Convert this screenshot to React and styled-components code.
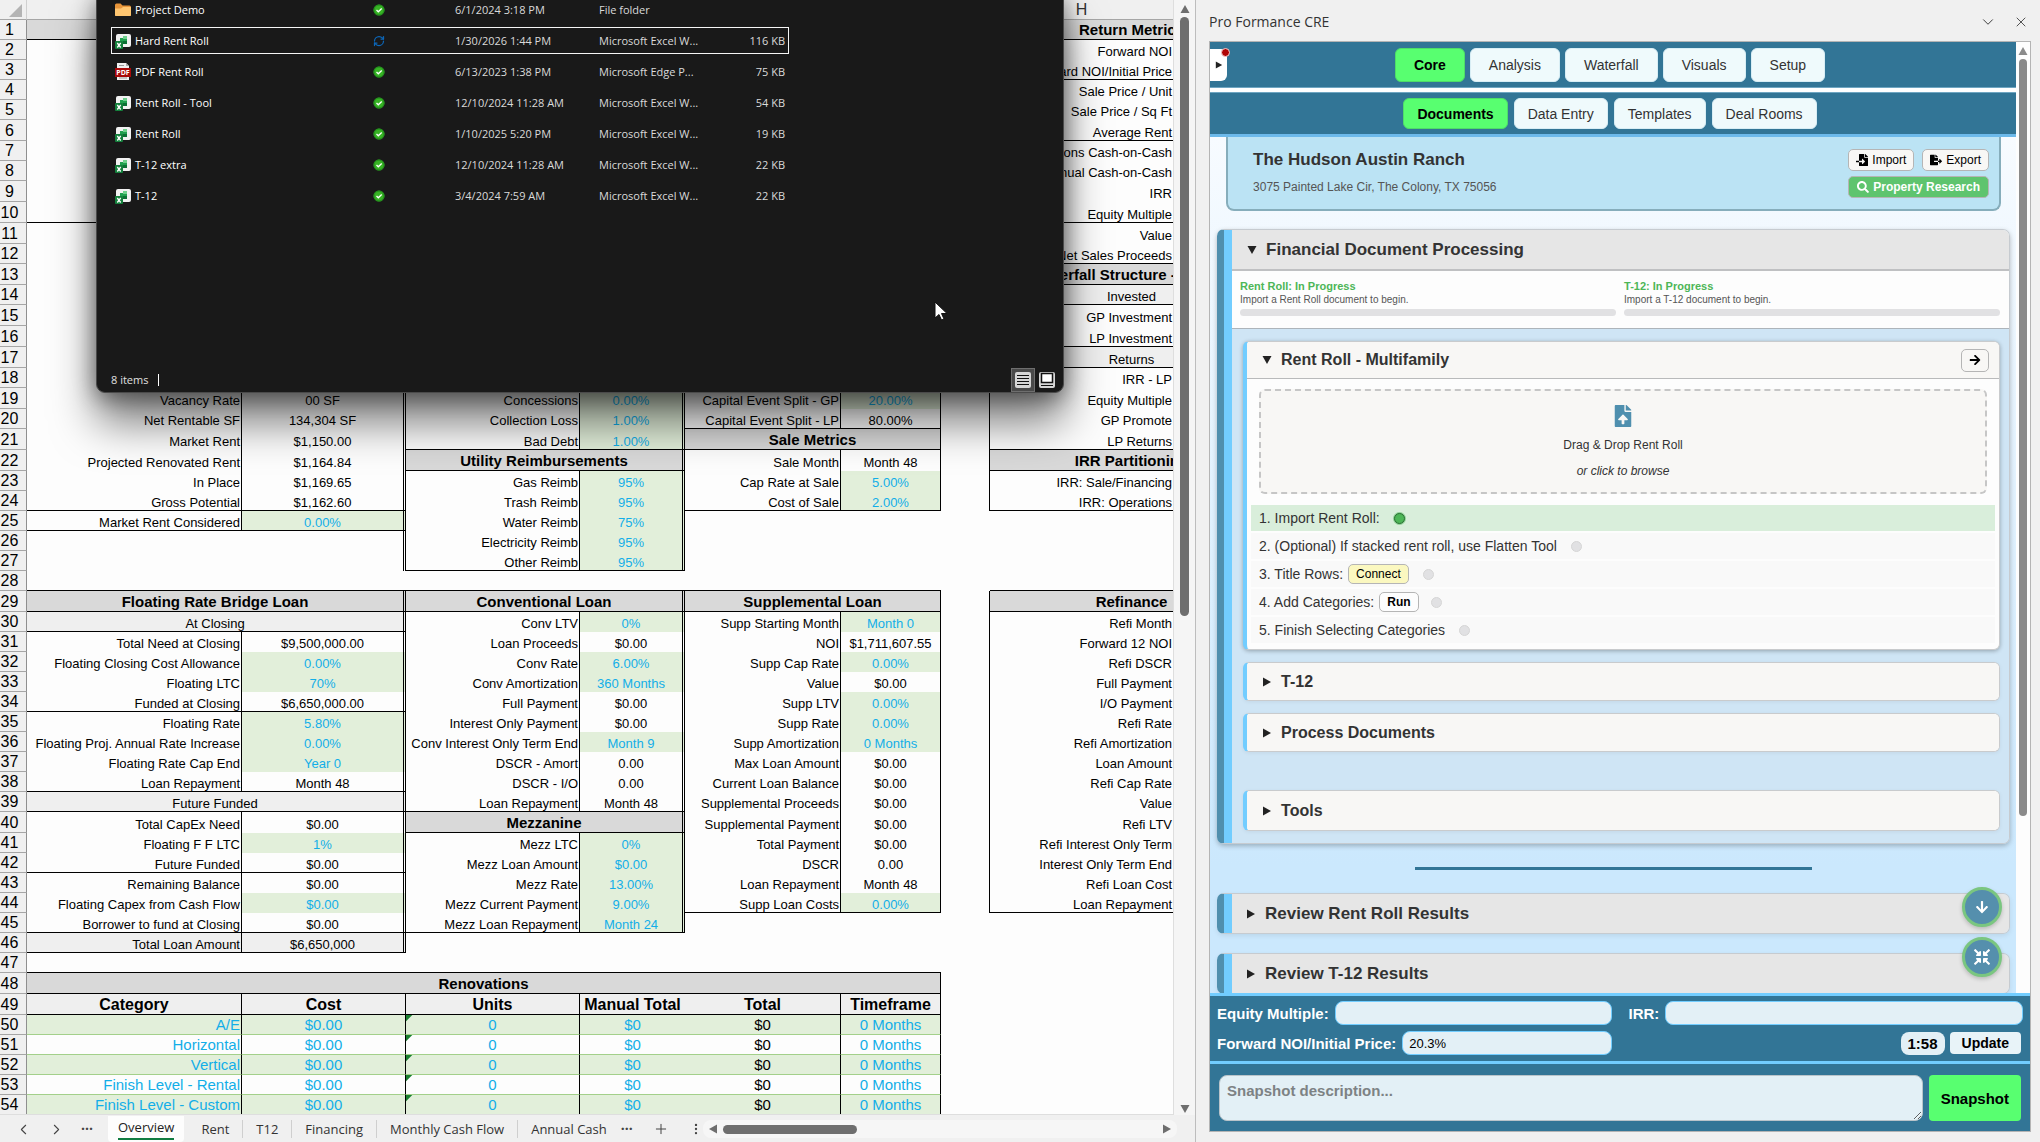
import React from "react"
import styled, { createGlobalStyle } from "styled-components"
import {
  FaArrowDown,
  FaArrowRight,
  FaCompressArrowsAlt,
  FaFileExport,
  FaFileImport,
  FaFileUpload,
  FaSearch,
} from "react-icons/fa"
import { ChevronDown, ChevronLeft, ChevronRight, MoreVertical, Plus, RefreshCw, X } from "lucide-react"

const GlobalStyle = createGlobalStyle`
  * { box-sizing: border-box; }
  body {
    margin: 0;
    overflow: hidden;
    background: #f0f0f0;
    color: #000;
    font-family: "Liberation Sans", Arial, sans-serif;
  }
  button, input, textarea { font-family: inherit; }
  button { cursor: pointer; }
`

const uiFont = `"Open Sans", "Noto Sans", sans-serif`

const Screen = styled.div`
  position: relative;
  display: flex;
  height: 100vh;
  overflow: hidden;
`

/* ---------- workbook ---------- */

const Workbook = styled.main`
  flex: 1;
  min-width: 0;
  display: flex;
  flex-direction: column;
`
const SheetArea = styled.div`
  flex: 1;
  min-height: 0;
  display: flex;
`
const SheetView = styled.div`
  flex: 1;
  min-width: 0;
  overflow: hidden;
  background: #fdfdfd;
  border-right: 1px solid #dedede;
  border-bottom: 1px solid #dedede;
`
const Grid = styled.table`
  width: 1273px;
  table-layout: fixed;
  border-collapse: separate;
  border-spacing: 0;
`
const GridRow = styled.tr`
  height: ${props => props.h}px;
`
const Corner = styled.td`
  padding: 0 4px 2px 0;
  background: #f0f0f0;
  border-right: 1px solid #d0d0d0;
  border-bottom: 1px solid #a6a6a6;
  line-height: 0;
  text-align: right;
  vertical-align: bottom;
`
const ColHead = styled.th`
  padding: 0;
  background: #f0f0f0;
  border-bottom: 1px solid #a6a6a6;
  color: #333;
  font-size: 16px;
  font-weight: normal;
  line-height: 18px;
`
const RowHead = styled.th`
  padding: 0 7px 0 0;
  background: #f0f0f0;
  border-right: 1px solid #8f8f8f;
  border-bottom: 1px solid #a6a6a6;
  font-size: 16px;
  font-weight: normal;
  line-height: 18px;
  text-align: center;
  vertical-align: bottom;
  white-space: nowrap;
`

const sides = {
  line: "1px solid #000",
  double: "3px double #000",
}
const tones = {
  title: "#d9d9d9",
  sub: "#efefef",
  input: "#e2efda",
}

const Cell = styled.td`
  padding: 0 1px ${props => (props.$rule && !props.$size ? 0 : 1)}px;
  overflow: hidden;
  white-space: nowrap;
  vertical-align: bottom;
  background: ${props => tones[props.$tone] || "transparent"};
  color: ${props => (props.$blue ? "#12aee8" : "#000")};
  font-size: ${props => props.$size || 13}px;
  font-weight: ${props => (props.$bold ? "bold" : "normal")};
  line-height: ${props => (props.$size ? 17 : 15)}px;
  text-align: ${props => props.$align || "center"};
  ${props => (props.$rule ? `border-bottom: 1px solid ${props.$rule};` : "")}
  ${props => (props.$side ? `border-right: ${sides[props.$side]};` : "")}
`
const ErrorCell = styled(Cell)`
  background-image: linear-gradient(135deg, #1a8030 4px, transparent 5px);
`

const Columns = [27, 215, 164, 174, 105, 156, 100, 49, 183, 100]

const HEIGHTS = [
  20, 20, 20, 20, 20, 21, 20, 20, 21, 21, 21, 20, 21, 20, 21, 21, 21, 20, 21, 20,
  21, 21, 20, 20, 20, 20, 20, 20, 21, 20, 20, 20, 20, 20, 20, 20, 20, 20, 20, 21,
  20, 20, 20, 20, 20, 20, 20, 21, 21, 20, 20, 20, 20, 20,
]

const title = text => ({ kind: "title", text })
const sub = text => ({ kind: "sub", text })
const rule = { kind: "rule" }
const open = { kind: "open" }
// flags: i = input cell, e = last line of a group, t = shaded total
const item = (label, value, flags = "") => ({
  kind: "item",
  label,
  value,
  input: flags.includes("i"),
  end: flags.includes("e"),
  total: flags.includes("t"),
})

const BLOCKS = [
  {
    side: "double",
    rows: {
      1: title(""),
      10: rule,
      19: item("Vacancy Rate", "00 SF"),
      20: item("Net Rentable SF", "134,304 SF"),
      21: item("Market Rent", "$1,150.00"),
      22: item("Projected Renovated Rent", "$1,164.84"),
      23: item("In Place", "$1,169.65"),
      24: item("Gross Potential", "$1,162.60", "e"),
      25: item("Market Rent Considered", "0.00%", "ie"),
      26: open,
      27: open,
      28: rule,
      29: title("Floating Rate Bridge Loan"),
      30: sub("At Closing"),
      31: item("Total Need at Closing", "$9,500,000.00"),
      32: item("Floating Closing Cost Allowance", "0.00%", "i"),
      33: item("Floating LTC", "70%", "i"),
      34: item("Funded at Closing", "$6,650,000.00", "e"),
      35: item("Floating Rate", "5.80%", "i"),
      36: item("Floating Proj. Annual Rate Increase", "0.00%", "i"),
      37: item("Floating Rate Cap End", "Year 0", "i"),
      38: item("Loan Repayment", "Month 48", "e"),
      39: sub("Future Funded"),
      40: item("Total CapEx Need", "$0.00"),
      41: item("Floating F F LTC", "1%", "i"),
      42: item("Future Funded", "$0.00", "e"),
      43: item("Remaining Balance", "$0.00"),
      44: item("Floating Capex from Cash Flow", "$0.00", "i"),
      45: item("Borrower to fund at Closing", "$0.00", "e"),
      46: item("Total Loan Amount", "$6,650,000", "et"),
      47: rule,
    },
  },
  {
    side: "double",
    rows: {
      19: item("Concessions", "0.00%", "i"),
      20: item("Collection Loss", "1.00%", "i"),
      21: item("Bad Debt", "1.00%", "ie"),
      22: title("Utility Reimbursements"),
      23: item("Gas Reimb", "95%", "i"),
      24: item("Trash Reimb", "95%", "i"),
      25: item("Water Reimb", "75%", "i"),
      26: item("Electricity Reimb", "95%", "i"),
      27: item("Other Reimb", "95%", "ie"),
      28: rule,
      29: title("Conventional Loan"),
      30: item("Conv LTV", "0%", "i"),
      31: item("Loan Proceeds", "$0.00"),
      32: item("Conv Rate", "6.00%", "i"),
      33: item("Conv Amortization", "360 Months", "i"),
      34: item("Full Payment", "$0.00"),
      35: item("Interest Only Payment", "$0.00"),
      36: item("Conv Interest Only Term End", "Month 9", "i"),
      37: item("DSCR - Amort", "0.00"),
      38: item("DSCR - I/O", "0.00"),
      39: item("Loan Repayment", "Month 48", "e"),
      40: title("Mezzanine"),
      41: item("Mezz LTC", "0%", "i"),
      42: item("Mezz Loan Amount", "$0.00", "i"),
      43: item("Mezz Rate", "13.00%", "i"),
      44: item("Mezz Current Payment", "9.00%", "i"),
      45: item("Mezz Loan Repayment", "Month 24", "ie"),
      47: rule,
    },
  },
  {
    side: "line",
    rows: {
      19: item("Capital Event Split - GP", "20.00%", "i"),
      20: item("Capital Event Split - LP", "80.00%", "e"),
      21: title("Sale Metrics"),
      22: item("Sale Month", "Month 48"),
      23: item("Cap Rate at Sale", "5.00%", "i"),
      24: item("Cost of Sale", "2.00%", "ie"),
      28: rule,
      29: title("Supplemental Loan"),
      30: item("Supp Starting Month", "Month 0", "i"),
      31: item("NOI", "$1,711,607.55"),
      32: item("Supp Cap Rate", "0.00%", "i"),
      33: item("Value", "$0.00"),
      34: item("Supp LTV", "0.00%", "i"),
      35: item("Supp Rate", "0.00%", "i"),
      36: item("Supp Amortization", "0 Months", "i"),
      37: item("Max Loan Amount", "$0.00"),
      38: item("Current Loan Balance", "$0.00"),
      39: item("Supplemental Proceeds", "$0.00"),
      40: item("Supplemental Payment", "$0.00"),
      41: item("Total Payment", "$0.00"),
      42: item("DSCR", "0.00"),
      43: item("Loan Repayment", "Month 48"),
      44: item("Supp Loan Costs", "0.00%", "ie"),
      47: rule,
    },
  },
]

const RETURNS = {
  1: title("Return Metrics"),
  2: item("Forward NOI"),
  3: item("Forward NOI/Initial Price", "", "e"),
  4: item("Sale Price / Unit"),
  5: item("Sale Price / Sq Ft"),
  6: item("Average Rent", "", "e"),
  7: item("Operations Cash-on-Cash"),
  8: item("Annual Cash-on-Cash"),
  9: item("IRR"),
  10: item("Equity Multiple", "", "e"),
  11: item("Value"),
  12: item("Net Sales Proceeds", "", "e"),
  13: title("Waterfall Structure - Annual"),
  14: sub("Invested"),
  15: item("GP Investment"),
  16: item("LP Investment", "", "e"),
  17: sub("Returns"),
  18: item("IRR - LP"),
  19: item("Equity Multiple"),
  20: item("GP Promote"),
  21: item("LP Returns", "", "e"),
  22: title("IRR Partitioning"),
  23: item("IRR: Sale/Financing"),
  24: item("IRR: Operations", "", "e"),
  28: rule,
  29: title("Refinance"),
  30: item("Refi Month"),
  31: item("Forward 12 NOI"),
  32: item("Refi DSCR"),
  33: item("Full Payment"),
  34: item("I/O Payment"),
  35: item("Refi Rate"),
  36: item("Refi Amortization"),
  37: item("Loan Amount"),
  38: item("Refi Cap Rate"),
  39: item("Value"),
  40: item("Refi LTV"),
  41: item("Refi Interest Only Term"),
  42: item("Interest Only Term End"),
  43: item("Refi Loan Cost"),
  44: item("Loan Repayment", "", "e"),
}

const RENOVATIONS = {
  50: "A/E",
  51: "Horizontal",
  52: "Vertical",
  53: "Finish Level - Rental",
  54: "Finish Level - Custom",
}

const BlockCells = ({ entry, side, inner }) => {
  if (!entry) return <><Cell /><Cell /></>
  if (entry.kind === "rule") return <Cell colSpan={2} $rule="#000" />
  if (entry.kind === "open") return <><Cell /><Cell $side={side} /></>
  if (entry.kind === "title") {
    return <Cell colSpan={2} $tone="title" $bold $size={15} $rule="#000" $side={side}>{entry.text}</Cell>
  }
  if (entry.kind === "sub") {
    return <Cell colSpan={2} $tone="sub" $rule="#000" $side={side}>{entry.text}</Cell>
  }
  const end = entry.end ? "#000" : undefined
  return (
    <>
      <Cell $align="right" $side={inner} $rule={end} $tone={entry.total && "sub"}>{entry.label}</Cell>
      <Cell
        $side={side}
        $rule={end}
        $blue={entry.input}
        $tone={entry.input ? "input" : entry.total && "sub"}
      >
        {entry.value}
      </Cell>
    </>
  )
}

const RenovationCells = ({ n }) => {
  if (n === 48) {
    return <Cell colSpan={6} $tone="title" $bold $size={15} $rule="#000" $side="line">Renovations</Cell>
  }
  if (n === 49) {
    const head = { $tone: "sub", $bold: true, $size: 16, $rule: "#000" }
    return (
      <>
        <Cell {...head} $side="line">Category</Cell>
        <Cell {...head} $side="line">Cost</Cell>
        <Cell {...head} $side="line">Units</Cell>
        <Cell {...head}>Manual Total</Cell>
        <Cell {...head} $side="line">Total</Cell>
        <Cell {...head} $side="line">Timeframe</Cell>
      </>
    )
  }
  const body = { $tone: n % 2 === 0 ? "input" : undefined, $size: 15, $rule: "#a3d08a" }
  return (
    <>
      <Cell {...body} $blue $align="right" $side="line">{RENOVATIONS[n]}</Cell>
      <Cell {...body} $blue $side="line">$0.00</Cell>
      <ErrorCell {...body} $blue $side="line">0</ErrorCell>
      <Cell {...body} $blue>$0</Cell>
      <Cell {...body} $side="line">$0</Cell>
      <Cell {...body} $blue $side="line">0 Months</Cell>
    </>
  )
}

const Spreadsheet = () => (
  <Grid>
    <colgroup>
      {Columns.map((w, i) => <col key={i} width={w} />)}
    </colgroup>
    <thead>
      <GridRow h={20}>
        <Corner><svg width="13" height="13"><path d="M13 0v13H0z" fill="#b4b4b4" /></svg></Corner>
        <ColHead colSpan={7} />
        <ColHead>H</ColHead>
        <ColHead />
      </GridRow>
    </thead>
    <tbody>
      {HEIGHTS.map((h, i) => {
        const n = i + 1
        const right = RETURNS[n]
        return (
          <GridRow key={n} h={h}>
            <RowHead scope="row">{n}</RowHead>
            {n >= 48
              ? <RenovationCells n={n} />
              : BLOCKS.map((b, k) => <BlockCells key={k} entry={b.rows[n]} side={b.side} inner="line" />)}
            <Cell $side={right && right.kind !== "rule" ? "line" : undefined} />
            <BlockCells entry={right} />
          </GridRow>
        )
      })}
    </tbody>
  </Grid>
)

/* ---------- scroll bars ---------- */

const VScroll = styled.div`
  flex: none;
  width: 21px;
  display: flex;
  flex-direction: column;
  align-items: center;
  padding: 4px 0 1px;
  background: #f5f5f5;
`
const VThumb = styled.div`
  width: ${props => props.$w}px;
  height: ${props => props.$size};
  margin: ${props => props.$gap}px 0 auto;
  border-radius: 5px;
  background: ${props => props.$color};
`
const HScroll = styled.div`
  flex: 1;
  display: flex;
  align-items: center;
  height: 18px;
  margin-right: 18px;
  padding: 0 5px;
  border-radius: 8px;
  background: #f6f6f6;
`
const HThumb = styled.div`
  width: 29%;
  height: 9px;
  margin: 0 auto 0 5px;
  border-radius: 5px;
  background: #6e6e6e;
`

const turns = { up: 0, right: 90, down: 180, left: 270 }
const Arrow = ({ to, color = "#6e6e6e", size = 10 }) => (
  <svg width={size} height={size} viewBox="0 0 10 10" aria-hidden="true">
    <path d="M5 1 9.500 9H.5z" fill={color} transform={`rotate(${turns[to]} 5 5)`} />
  </svg>
)

/* ---------- sheet tabs ---------- */

const TabBar = styled.nav`
  flex: none;
  display: flex;
  align-items: center;
  height: 27px;
  padding-top: 1px;
  background: #f0f0f0;
  font-family: ${uiFont};
`
const TabTools = styled.div`
  display: flex;
  align-items: center;
  justify-content: space-between;
  width: ${props => props.$w}px;
  padding: 0 ${props => props.$pad}px;
  color: #444;
`
const Dots = styled.span`
  font-size: 14px;
  font-weight: bold;
  line-height: 16px;
`
const SheetTab = styled.button`
  height: 18px;
  padding: 0 13px;
  border: 0;
  border-right: 1px solid ${props => (props.$last ? "transparent" : "#cfcfcf")};
  background: none;
  color: #333;
  font-size: 13px;
  line-height: 18px;
  white-space: nowrap;
`
const ActiveTab = styled.button`
  align-self: stretch;
  margin-right: 4px;
  padding: 0 10px 2px;
  border: 0;
  border-radius: 0 0 4px 4px;
  background: #fdfdfd;
  color: #222;
  font-size: 13px;
  line-height: 22px;
  span {
    display: block;
    border-bottom: 2px solid #107c41;
  }
`

/* ---------- file explorer ---------- */

const Explorer = styled.section`
  position: absolute;
  z-index: 2;
  top: -7px;
  left: 96px;
  width: 968px;
  height: 400px;
  display: flex;
  flex-direction: column;
  justify-content: space-between;
  border: 1px solid #4a4a4a;
  border-radius: 0 0 9px 9px;
  background: #191919;
  box-shadow: 0 30px 44px rgba(0, 0, 0, 0.5), 0 4px 22px rgba(0, 0, 0, 0.45);
  font-family: ${uiFont};
  font-size: 11px;
`
const FileTable = styled.table`
  width: 682px;
  margin-left: 12px;
  table-layout: fixed;
  border-collapse: collapse;
  color: #dadada;
`
const FileRow = styled.tr`
  height: 31px;
  ${props => (props.$selected ? "outline: 1px solid #f5f5f5; outline-offset: -3px; border-radius: 2px;" : "")}
`
const FileCell = styled.td`
  padding: 0 6px 0 0;
  white-space: nowrap;
  vertical-align: middle;
  text-align: ${props => props.$align || "left"};
  svg { display: block; }
`
const FileName = styled.div`
  display: flex;
  align-items: center;
  gap: 4px;
  padding-left: 6px;
  color: #fff;
`
const ExplorerStatus = styled.footer`
  display: flex;
  align-items: center;
  height: 25px;
  padding: 0 4px 0 14px;
  color: #e0e0e0;
`
const StatusMark = styled.span`
  width: 1px;
  height: 12px;
  margin: 0 auto 0 10px;
  background: #fff;
`
const ViewButton = styled.button`
  display: flex;
  align-items: center;
  justify-content: center;
  width: 24px;
  height: 24px;
  padding: 0;
  border: 1px solid ${props => (props.$on ? "#6e6e6e" : "transparent")};
  background: ${props => (props.$on ? "#4a4a4a" : "none")};
`
const Pointer = styled.svg`
  position: absolute;
  z-index: 3;
  top: 301px;
  left: 934px;
`

const FolderIcon = () => (
  <svg width="16" height="16" viewBox="0 0 16 16">
    <path d="M0 3a1.500 1.500 0 0 1 1.500-1.500h4L7.500 3.500h7A1.500 1.500 0 0 1 16 5v8a1 1 0 0 1-1 1H1a1 1 0 0 1-1-1z" fill="#e8953a" />
    <path d="M0 6.500h6L8 5h8v8a1 1 0 0 1-1 1H1a1 1 0 0 1-1-1z" fill="#ffc670" />
  </svg>
)
const ExcelIcon = () => (
  <svg width="16" height="16" viewBox="0 0 16 16">
    <rect x="1" y="1" width="15" height="13" rx="2" fill="#f2f2f2" />
    <path d="M5 5h3V3h4v8H8v-1H5z" fill="#21a050" />
    <path d="M8 3h4v3H8z" fill="#6fd08c" />
    <path d="M8 8h4v3H8z" fill="#0c7034" />
    <rect x="0" y="8" width="8" height="8" rx="1" fill="#14803c" />
    <path d="M2.300 10 5.700 14.500M5.700 10 2.300 14.500" stroke="#fff" strokeWidth="1.300" />
  </svg>
)
const PdfIcon = () => (
  <svg width="16" height="17" viewBox="0 0 16 17">
    <path d="M2 0h9l3 3v14H2z" fill="#f0f0f0" />
    <path d="M11 0v3h3z" fill="#a8a8a8" />
    <path d="M4 2.500h5M4 15h8" stroke="#9a9a9a" />
    <rect x="0" y="5" width="16" height="9" fill="#a80808" />
    <text x="8" y="12" fill="#fff" fontSize="7" fontWeight="bold" textAnchor="middle">PDF</text>
  </svg>
)
const SyncedIcon = () => (
  <svg width="12" height="12" viewBox="0 0 12 12">
    <circle cx="6" cy="6" r="5.500" fill="#37b324" />
    <circle cx="6" cy="6" r="5" fill="none" stroke="#1f8a1c" />
    <path d="m3.500 6 1.800 1.800L8.700 4.500" fill="none" stroke="#fff" strokeWidth="1.300" />
  </svg>
)

const fileIcons = { folder: <FolderIcon />, excel: <ExcelIcon />, pdf: <PdfIcon /> }

const FILES = [
  { icon: "folder", name: "Project Demo", date: "6/1/2024 3:18 PM", type: "File folder", size: "" },
  { icon: "excel", name: "Hard Rent Roll", date: "1/30/2026 1:44 PM", type: "Microsoft Excel W...", size: "116 KB", selected: true },
  { icon: "pdf", name: "PDF Rent Roll", date: "6/13/2023 1:38 PM", type: "Microsoft Edge P...", size: "75 KB" },
  { icon: "excel", name: "Rent Roll - Tool", date: "12/10/2024 11:28 AM", type: "Microsoft Excel W...", size: "54 KB" },
  { icon: "excel", name: "Rent Roll", date: "1/10/2025 5:20 PM", type: "Microsoft Excel W...", size: "19 KB" },
  { icon: "excel", name: "T-12 extra", date: "12/10/2024 11:28 AM", type: "Microsoft Excel W...", size: "22 KB" },
  { icon: "excel", name: "T-12", date: "3/4/2024 7:59 AM", type: "Microsoft Excel W...", size: "22 KB" },
]

const FileExplorer = () => (
  <Explorer>
    <FileTable>
      <colgroup>
        <col width="264" />
        <col width="82" />
        <col width="144" />
        <col width="110" />
        <col width="82" />
      </colgroup>
      <tbody>
        {FILES.map(f => (
          <FileRow key={f.name} $selected={f.selected}>
            <FileCell><FileName>{fileIcons[f.icon]}{f.name}</FileName></FileCell>
            <FileCell>
              {f.selected ? <RefreshCw size={12} color="#0c66b8" strokeWidth={2.5} /> : <SyncedIcon />}
            </FileCell>
            <FileCell>{f.date}</FileCell>
            <FileCell>{f.type}</FileCell>
            <FileCell $align="right">{f.size}</FileCell>
          </FileRow>
        ))}
      </tbody>
    </FileTable>
    <ExplorerStatus>
      8 items
      <StatusMark />
      <ViewButton $on aria-label="Details view">
        <svg width="16" height="16">
          <rect width="16" height="16" rx="2" fill="#d6d6d6" />
          <path d="M2 3.500h12M2 6.500h12M2 9.500h12M2 12.500h12" stroke="#111" />
        </svg>
      </ViewButton>
      <ViewButton aria-label="Thumbnail view">
        <svg width="16" height="16">
          <rect width="16" height="16" rx="2" fill="#d6d6d6" />
          <path d="M2.500 1.500h11v9h-11z" fill="#fff" stroke="#111" strokeWidth="1.500" />
          <path d="M2 13.500h12" stroke="#111" />
        </svg>
      </ViewButton>
    </ExplorerStatus>
  </Explorer>
)

/* ---------- task pane ---------- */

const Pane = styled.aside`
  flex: none;
  width: 41.42%;
  display: flex;
  flex-direction: column;
  padding: 0 9px 10px 13px;
  border-left: 1px solid #bdbdbd;
  background: #f0f0f0;
`
const PaneTitle = styled.header`
  flex: none;
  display: flex;
  align-items: center;
  gap: 16px;
  height: 41px;
  padding: 2px 2px 0 0;
  color: #333;
  font-family: ${uiFont};
  font-size: 14px;
  h1 {
    margin: 0 auto 0 0;
    font-size: 14px;
    font-weight: normal;
  }
`
const IconButton = styled.button`
  padding: 0;
  border: 0;
  background: none;
  color: #333;
  line-height: 0;
`
const Frame = styled.div`
  flex: 1;
  min-height: 0;
  display: flex;
  flex-direction: column;
  border: 1px solid #b4b4b4;
  background: #fff;
`
const FrameBody = styled.div`
  flex: 1;
  min-height: 0;
  display: flex;
`
const PaneScroll = styled(VScroll)`
  width: 14px;
  background: #fdfdfd;
`
const PaneMain = styled.div`
  flex: 1;
  min-width: 0;
  display: flex;
  flex-direction: column;
`
const NavBar = styled.nav`
  position: relative;
  flex: none;
  display: flex;
  justify-content: center;
  background: #327596;
  ${props => (props.$sub
    ? "gap: 6px; margin-top: 4px; padding: 5px 6px 5px 0; border-top: 1px solid #6fa6c2; border-bottom: 3px solid #6cb9ea;"
    : "gap: 5px; padding: 6px 6px 5px 0; border-bottom: 1px solid #6fa6c2;")}
`
const NavButton = styled.button`
  height: ${props => (props.$sub ? 31 : 34)}px;
  padding: 0 ${props => (props.$sub ? 13 : 18)}px;
  border: 1px solid ${props => (props.$on ? "#4fdc68" : "#d8eef5")};
  border-radius: 6px;
  background: ${props => (props.$on ? "#58ff70" : "#effafc")};
  color: ${props => (props.$on ? "#000" : "#333")};
  font-size: 14px;
  font-weight: ${props => (props.$on ? "bold" : "normal")};
`
const DrawerTab = styled.button`
  position: absolute;
  top: 7px;
  left: 0;
  width: 17px;
  height: 32px;
  padding: 0;
  border: 0;
  border-radius: 0 6px 6px 0;
  background: #fff;
  line-height: 0;
`
const Alert = styled.span`
  position: absolute;
  top: -1px;
  right: -3px;
  width: 9px;
  height: 9px;
  border: 1px solid #f3d0d0;
  border-radius: 50%;
  background: #b00505;
`
const Content = styled.div`
  position: relative;
  flex: 1;
  min-height: 0;
  overflow: hidden;
  padding: 0 6px 0 7px;
  background: linear-gradient(#f7fbff, #cbe8fd 85%);
`
const PropertyCard = styled.section`
  display: flex;
  align-items: center;
  justify-content: space-between;
  margin: 0 9px;
  padding: 12px 10px 11px 25px;
  border: 2px solid #86adbb;
  border-top: 0;
  border-radius: 0 0 8px 8px;
  background: #bbe3f4;
  h2 {
    margin: 0 0 7px;
    color: #333;
    font-size: 17px;
    line-height: 20px;
  }
  p {
    margin: 0;
    color: #555;
    font-size: 12px;
    line-height: 20px;
  }
`
const PropertyActions = styled.div`
  display: grid;
  grid-template-columns: auto auto;
  gap: 5px 8px;
`
const SmallButton = styled.button`
  display: inline-flex;
  align-items: center;
  justify-content: center;
  gap: 4px;
  height: ${props => props.$h || 22}px;
  padding: 0 7px;
  border: 1px solid #b5b5b5;
  border-radius: 5px;
  background: ${props => props.$bg || "#f8f7f5"};
  color: ${props => props.$color || "#000"};
  font-size: 12px;
  font-weight: ${props => (props.$bold ? "bold" : "normal")};
  ${props => (props.$wide ? "grid-column: 1 / -1;" : "")}
`
const Section = styled.section`
  margin-top: ${props => props.$gap}px;
  overflow: hidden;
  border: 1px solid #c6cbd0;
  border-left: 7px solid #4f8fae;
  border-radius: 7px;
  box-shadow: 0 2px 5px rgba(0, 0, 0, ${props => (props.$open ? 0.25 : 0.08)});
`
const SectionInner = styled.div`
  border-left: 8px solid #72cdff;
`
const Heading = styled.button`
  display: flex;
  align-items: center;
  gap: 9px;
  width: 100%;
  height: ${props => props.$h}px;
  padding: 0 ${props => props.$pad}px;
  border: 0;
  ${props => (props.$open ? "border-bottom: 2px solid #bfc0c2;" : "")}
  background: ${props => props.$bg};
  color: #333;
  font-size: ${props => props.$size}px;
  font-weight: bold;
  text-align: left;
`
const Progress = styled.div`
  display: grid;
  grid-template-columns: 1fr 1fr;
  gap: 8px;
  padding: 8px 9px 12px 8px;
  border-bottom: 1px solid #adb4ba;
  background: #fdfdfd;
  font-size: 10px;
  line-height: 14px;
  color: #555;
  strong {
    display: block;
    color: #4db657;
    font-size: 11px;
  }
`
const Bar = styled.div`
  height: 7px;
  margin-top: 2px;
  border-radius: 4px;
  background: #e1e1e3;
`
const SectionBody = styled.div`
  display: flex;
  flex-direction: column;
  gap: 12px;
  padding: 12px 9px 12px 11px;
  background: #cfe5f5;
`
const Card = styled.section`
  overflow: hidden;
  margin-top: ${props => props.$gap || 0}px;
  border: 1px solid #c9cbcd;
  border-left: 4px solid #72cdff;
  border-radius: 6px;
  background: #fdfdfd;
  box-shadow: 0 1px 4px rgba(0, 0, 0, ${props => (props.$open ? 0.3 : 0.06)});
`
const CardHead = styled.div`
  display: flex;
  align-items: center;
  padding-right: 10px;
  border-bottom: ${props => (props.$open ? "1px solid #b9babb" : "0")};
  background: #f8f7f5;
`
const DropZone = styled.button`
  display: flex;
  flex-direction: column;
  align-items: center;
  gap: 10px;
  width: calc(100% - 24px);
  margin: 10px 12px 11px;
  padding: 14px 0 13px;
  border: 2px dashed #c6c6c6;
  border-radius: 6px;
  background: #f8f7f5;
  color: #333;
  font-size: 12px;
  line-height: 16px;
`
const Steps = styled.ul`
  display: flex;
  flex-direction: column;
  gap: 2px;
  margin: 0;
  padding: 0 4px 6px;
  list-style: none;
`
const Step = styled.li`
  display: flex;
  align-items: center;
  height: 26px;
  padding: 0 8px;
  background: ${props => (props.$done ? "#d9eedb" : "#f9f9f9")};
  color: #333;
  font-size: 14px;
  button { margin-left: 5px; }
`
const Dot = styled.span`
  width: 11px;
  height: 11px;
  margin-left: ${props => props.$gap}px;
  border: 1px solid ${props => (props.$done ? "#2c6e34" : "#d6d6d6")};
  border-radius: 50%;
  background: ${props => (props.$done ? "#4db657" : "#e1e1e3")};
  ${props => (props.$done ? "box-shadow: 0 0 0 1px #8fd097;" : "")}
`
const Divider = styled.hr`
  width: 50%;
  height: 3px;
  margin: 23px auto;
  border: 0;
  background: #327596;
`
const FabStack = styled.div`
  position: absolute;
  right: 14px;
  bottom: 16px;
  display: flex;
  flex-direction: column;
  gap: 10px;
`
const Fab = styled.button`
  display: flex;
  align-items: center;
  justify-content: center;
  width: 40px;
  height: 40px;
  padding: 0;
  border: 3px solid #7ac680;
  border-radius: 50%;
  background: #558fad;
  color: #fff;
  box-shadow: 0 2px 4px rgba(0, 0, 0, 0.2);
`
const Footer = styled.footer`
  flex: none;
  background: #327596;
  border-top: 3px solid #72cdff;
`
const Metrics = styled.div`
  display: grid;
  grid-template-columns: 1fr 1fr;
  gap: 6px 17px;
  padding: 5px 7px 6px;
`
const Field = styled.div`
  display: flex;
  align-items: center;
  gap: 6px;
  label {
    color: #fff;
    font-size: 15px;
    font-weight: bold;
    white-space: nowrap;
  }
  input {
    flex: 1;
    min-width: 0;
    height: 24px;
    padding: 0 6px;
    border: 1px solid #72cdff;
    border-radius: 8px;
    background: #e3f0f6;
    color: #000;
    font-size: 13px;
  }
`
const UpdateGroup = styled.div`
  display: flex;
  align-items: center;
  justify-content: flex-end;
  gap: 5px;
  padding-right: 2px;
`
const Timer = styled.span`
  padding: 3px 7px;
  border-radius: 8px;
  background: #e3f0f6;
  font-size: 15px;
  font-weight: bold;
  line-height: 17px;
`
const UpdateButton = styled.button`
  height: 22px;
  padding: 0 12px;
  border: 0;
  border-radius: 4px;
  background: #e8f3f8;
  font-size: 14px;
  font-weight: bold;
`
const Snapshot = styled.div`
  display: flex;
  gap: 6px;
  padding: 11px 9px 10px;
  border-top: 3px solid #72cdff;
  textarea {
    flex: 1;
    height: 46px;
    padding: 6px 7px;
    border: 1px solid #b9c4ca;
    border-radius: 8px;
    background: #e3f0f6;
    font-size: 15px;
    font-weight: bold;
    line-height: 17px;
  }
  textarea::placeholder { color: #7d8284; }
`
const SnapshotButton = styled.button`
  padding: 0 12px;
  border: 0;
  border-radius: 4px;
  background: #58ff70;
  font-size: 15px;
  font-weight: bold;
`

const Collapsed = ({ title, gap, h = 37 }) => (
  <Card $gap={gap}>
    <CardHead>
      <Heading $h={h} $pad={15} $size={16} $bg="#f8f7f5">
        <Arrow to="right" color="#222" />
        {title}
      </Heading>
    </CardHead>
  </Card>
)

const ResultSection = ({ title, gap }) => (
  <Section $gap={gap}>
    <SectionInner>
      <Heading $h={39} $pad={14} $size={17} $bg="#e6e6e6">
        <Arrow to="right" color="#222" />
        {title}
      </Heading>
    </SectionInner>
  </Section>
)

const TaskPane = () => (
  <Pane>
    <PaneTitle>
      <h1>Pro Formance CRE</h1>
      <IconButton aria-label="Task pane options"><ChevronDown size={18} strokeWidth={1.25} /></IconButton>
      <IconButton aria-label="Close"><X size={16} strokeWidth={1.25} /></IconButton>
    </PaneTitle>
    <Frame>
      <FrameBody>
        <PaneMain>
          <NavBar>
            <DrawerTab aria-label="Open drawer">
              <Arrow to="right" color="#222" size={8} />
              <Alert />
            </DrawerTab>
            <NavButton $on>Core</NavButton>
            <NavButton>Analysis</NavButton>
            <NavButton>Waterfall</NavButton>
            <NavButton>Visuals</NavButton>
            <NavButton>Setup</NavButton>
          </NavBar>
          <NavBar $sub>
            <NavButton $sub $on>Documents</NavButton>
            <NavButton $sub>Data Entry</NavButton>
            <NavButton $sub>Templates</NavButton>
            <NavButton $sub>Deal Rooms</NavButton>
          </NavBar>
          <Content>
            <PropertyCard>
              <div>
                <h2>The Hudson Austin Ranch</h2>
                <p>3075 Painted Lake Cir, The Colony, TX 75056</p>
              </div>
              <PropertyActions>
                <SmallButton><FaFileImport size={12} />Import</SmallButton>
                <SmallButton><FaFileExport size={12} />Export</SmallButton>
                <SmallButton $wide $bold $bg="#5ec46e" $color="#fff"><FaSearch size={12} />Property Research</SmallButton>
              </PropertyActions>
            </PropertyCard>

            <Section $gap={18} $open>
              <SectionInner>
                <Heading $open $h={41} $pad={15} $size={17} $bg="#e6e6e6">
                  <Arrow to="down" color="#222" />
                  Financial Document Processing
                </Heading>
                <Progress>
                  <div>
                    <strong>Rent Roll: In Progress</strong>
                    Import a Rent Roll document to begin.
                    <Bar />
                  </div>
                  <div>
                    <strong>T-12: In Progress</strong>
                    Import a T-12 document to begin.
                    <Bar />
                  </div>
                </Progress>
                <SectionBody>
                  <Card $open>
                    <CardHead $open>
                      <Heading $h={36} $pad={15} $size={16} $bg="#f8f7f5">
                        <Arrow to="down" color="#222" />
                        Rent Roll - Multifamily
                      </Heading>
                      <SmallButton $h={23} aria-label="Go to rent roll"><FaArrowRight size={12} /></SmallButton>
                    </CardHead>
                    <DropZone>
                      <FaFileUpload size={22} color="#4f8fae" />
                      <span>Drag &amp; Drop Rent Roll</span>
                      <em>or click to browse</em>
                    </DropZone>
                    <Steps>
                      <Step $done>1. Import Rent Roll:<Dot $done $gap={14} /></Step>
                      <Step>2. (Optional) If stacked rent roll, use Flatten Tool<Dot $gap={14} /></Step>
                      <Step>3. Title Rows:<SmallButton $h={20} $bg="#fbf8c0">Connect</SmallButton><Dot $gap={14} /></Step>
                      <Step>4. Add Categories:<SmallButton $h={20} $bold $bg="#fdfdfd">Run</SmallButton><Dot $gap={12} /></Step>
                      <Step>5. Finish Selecting Categories<Dot $gap={14} /></Step>
                    </Steps>
                  </Card>
                  <Collapsed title="T-12" />
                  <Collapsed title="Process Documents" />
                  <Collapsed title="Tools" gap={26} h={39} />
                </SectionBody>
              </SectionInner>
            </Section>
            <Divider />
            <ResultSection title="Review Rent Roll Results" gap={0} />
            <ResultSection title="Review T-12 Results" gap={19} />
            <FabStack>
              <Fab aria-label="Scroll down"><FaArrowDown size={14} /></Fab>
              <Fab aria-label="Collapse all"><FaCompressArrowsAlt size={16} /></Fab>
            </FabStack>
          </Content>
        </PaneMain>
        <PaneScroll>
          <Arrow to="up" color="#8a8a8a" />
          <VThumb $w={8} $gap={3} $size="80%" $color="#8a8a8a" />
        </PaneScroll>
      </FrameBody>
      <Footer>
        <Metrics>
          <Field>
            <label htmlFor="equity">Equity Multiple:</label>
            <input id="equity" defaultValue="" />
          </Field>
          <Field>
            <label htmlFor="irr">IRR:</label>
            <input id="irr" defaultValue="" />
          </Field>
          <Field>
            <label htmlFor="noi">Forward NOI/Initial Price:</label>
            <input id="noi" defaultValue="20.3%" />
          </Field>
          <UpdateGroup>
            <Timer>1:58</Timer>
            <UpdateButton>Update</UpdateButton>
          </UpdateGroup>
        </Metrics>
        <Snapshot>
          <textarea aria-label="Snapshot description" placeholder="Snapshot description..." />
          <SnapshotButton>Snapshot</SnapshotButton>
        </Snapshot>
      </Footer>
    </Frame>
  </Pane>
)

const App = () => (
  <>
    <GlobalStyle />
    <Screen>
      <Workbook>
        <SheetArea>
          <SheetView><Spreadsheet /></SheetView>
          <VScroll>
            <Arrow to="up" />
            <VThumb $w={9} $gap={3} $size="54%" $color="#6e6e6e" />
            <Arrow to="down" />
          </VScroll>
        </SheetArea>
        <TabBar>
          <TabTools $w={108} $pad={15}>
            <ChevronLeft size={17} strokeWidth={1.5} />
            <ChevronRight size={17} strokeWidth={1.5} />
            <Dots>···</Dots>
          </TabTools>
          <ActiveTab><span>Overview</span></ActiveTab>
          <SheetTab>Rent</SheetTab>
          <SheetTab>T12</SheetTab>
          <SheetTab>Financing</SheetTab>
          <SheetTab>Monthly Cash Flow</SheetTab>
          <SheetTab $last>Annual Cash</SheetTab>
          <TabTools $w={82} $pad={0}>
            <Dots>···</Dots>
            <Plus size={16} strokeWidth={1.5} />
            <MoreVertical size={14} />
          </TabTools>
          <HScroll>
            <Arrow to="left" />
            <HThumb />
            <Arrow to="right" />
          </HScroll>
        </TabBar>
      </Workbook>
      <TaskPane />
      <FileExplorer />
      <Pointer width="14" height="20" viewBox="0 0 14 20">
        <path d="M1 1v16l4-3.500 2.500 5.500 2.500-1-2.500-5.500H13z" fill="#fff" stroke="#111" />
      </Pointer>
    </Screen>
  </>
)

export default App
